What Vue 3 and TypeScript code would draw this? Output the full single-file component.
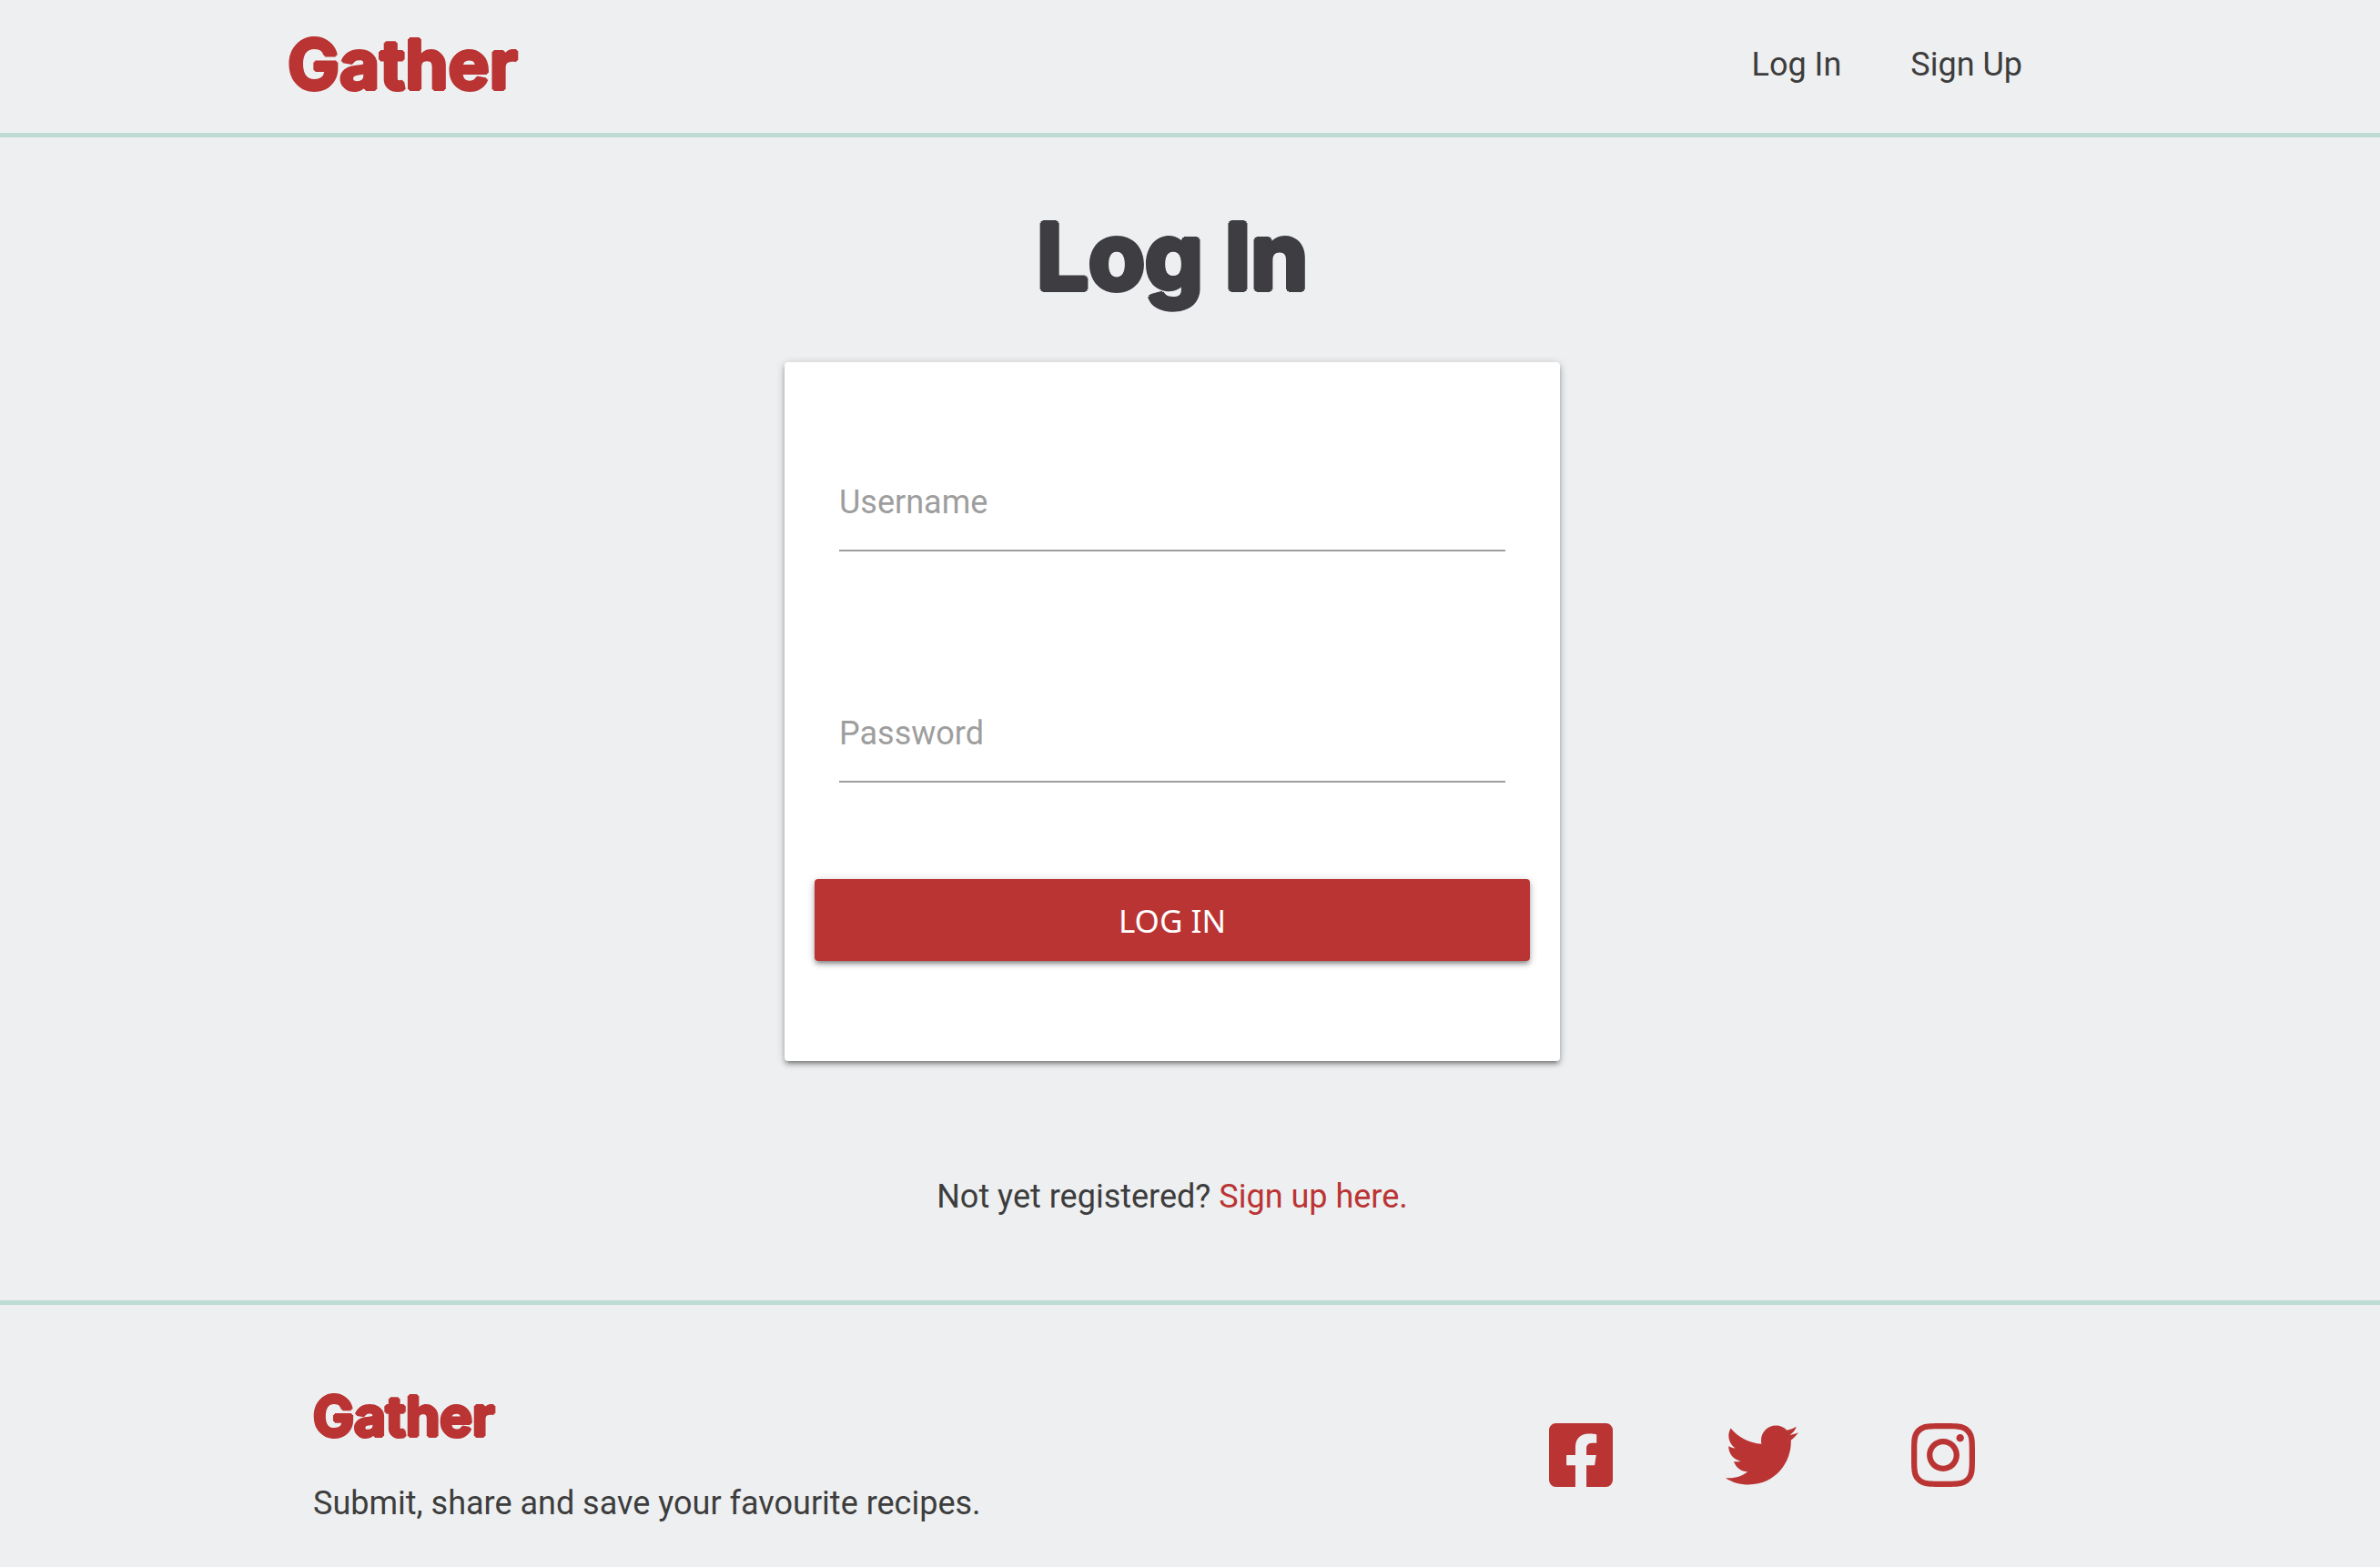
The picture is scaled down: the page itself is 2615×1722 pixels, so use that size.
<script setup lang="ts">
import { ref } from 'vue'

interface SocialLink {
  name: string
  viewBox: string
  width: number
  path: string
}

const username = ref('')
const password = ref('')

const socials: SocialLink[] = [
  {
    name: 'Facebook',
    viewBox: '0 0 448 512',
    width: 70,
    path: 'M400 32H48A48 48 0 0 0 0 80v352a48 48 0 0 0 48 48h137.250V327.690h-63V256h63v-54.640c0-62.150 37-96.480 93.670-96.480 27.140 0 55.520 4.840 55.520 4.840v61h-31.270c-30.810 0-40.420 19.120-40.420 38.730V256h68.780l-11 71.690h-57.780V480H400a48 48 0 0 0 48-48V80a48 48 0 0 0-48-48z',
  },
  {
    name: 'Twitter',
    viewBox: '0 0 512 512',
    width: 80,
    path: 'M459.370 151.716c.325 4.548.325 9.097.325 13.645 0 138.720-105.583 298.558-298.558 298.558-59.452 0-114.680-17.219-161.137-47.106 8.447.974 16.568 1.299 25.340 1.299 49.055 0 94.213-16.568 130.274-44.832-46.132-.975-84.792-31.188-98.112-72.772 6.498.974 12.995 1.624 19.818 1.624 9.421 0 18.843-1.300 27.614-3.573-48.081-9.747-84.143-51.980-84.143-102.985v-1.299c13.969 7.797 30.214 12.670 47.431 13.319-28.264-18.843-46.781-51.005-46.781-87.391 0-19.492 5.197-37.360 14.294-52.954 51.655 63.675 129.300 105.258 216.365 109.807-1.624-7.797-2.599-15.918-2.599-24.040 0-57.828 46.782-104.934 104.934-104.934 30.213 0 57.502 12.670 76.670 33.137 23.715-4.548 46.456-13.320 66.599-25.340-7.798 24.366-24.366 44.833-46.132 57.827 21.117-2.273 41.584-8.122 60.426-16.243-14.292 20.791-32.161 39.308-52.628 54.253z',
  },
  {
    name: 'Instagram',
    viewBox: '0 0 448 512',
    width: 70,
    path: 'M224.100 141c-63.600 0-114.900 51.300-114.900 114.900s51.300 114.900 114.900 114.900S339 319.500 339 255.900 287.700 141 224.100 141zm0 189.600c-41.100 0-74.700-33.500-74.700-74.700s33.500-74.700 74.700-74.700 74.700 33.500 74.700 74.700-33.600 74.700-74.700 74.700zm146.400-194.300c0 14.900-12 26.800-26.800 26.800-14.900 0-26.800-12-26.800-26.800s12-26.800 26.800-26.800 26.800 12 26.800 26.800zm76.100 27.200c-1.700-35.900-9.900-67.700-36.200-93.900-26.200-26.200-58-34.400-93.900-36.200-37-2.100-147.900-2.100-184.900 0-35.800 1.700-67.600 9.900-93.900 36.100s-34.400 58-36.200 93.900c-2.100 37-2.100 147.900 0 184.900 1.700 35.900 9.900 67.700 36.200 93.900s58 34.400 93.900 36.200c37 2.100 147.900 2.100 184.900 0 35.900-1.700 67.700-9.900 93.900-36.200 26.200-26.200 34.400-58 36.200-93.900 2.100-37 2.100-147.800 0-184.800zM398.800 388c-7.800 19.600-22.900 34.700-42.600 42.600-29.500 11.700-99.500 9-132.100 9s-102.700 2.600-132.100-9c-19.600-7.800-34.700-22.900-42.600-42.600-11.700-29.500-9-99.500-9-132.100s-2.600-102.700 9-132.100c7.800-19.600 22.900-34.700 42.600-42.600 29.500-11.700 99.500-9 132.100-9s102.700-2.600 132.100 9c19.600 7.800 34.700 22.900 42.600 42.600 11.700 29.500 9 99.500 9 132.100s2.700 102.700-9 132.100z',
  },
]
</script>

<template>
  <div class="page">
    <header class="header">
      <div class="container header-inner">
        <a class="logo" href="#">Gather</a>
        <nav class="nav">
          <a href="#">Log In</a>
          <a href="#">Sign Up</a>
        </nav>
      </div>
    </header>

    <main class="main">
      <h1 class="title">Log In</h1>
      <form class="card" @submit.prevent>
        <div class="field">
          <input id="username" v-model="username" type="text" autocomplete="username" />
          <label v-show="!username" for="username">Username</label>
        </div>
        <div class="field">
          <input id="password" v-model="password" type="password" autocomplete="current-password" />
          <label v-show="!password" for="password">Password</label>
        </div>
        <button class="submit" type="submit">LOG IN</button>
      </form>
      <p class="register">Not yet registered? <a href="#">Sign up here.</a></p>
    </main>

    <footer class="footer">
      <div class="container footer-inner">
        <div>
          <a class="logo logo-small" href="#">Gather</a>
          <p class="tagline">Submit, share and save your favourite recipes.</p>
        </div>
        <ul class="socials">
          <li v-for="s in socials" :key="s.name">
            <a href="#" :aria-label="s.name">
              <svg :viewBox="s.viewBox" :width="s.width" height="80" aria-hidden="true">
                <path :d="s.path" fill="currentColor" />
              </svg>
            </a>
          </li>
        </ul>
      </div>
    </footer>
  </div>
</template>

<style>
body {
  margin: 0;
  background: #edeff0;
}
</style>

<style scoped>
.page {
  color: #3d3d3d;
  font-family: Roboto, "Liberation Sans", sans-serif;
  font-size: 36px;
  line-height: 54px;
}

a {
  color: inherit;
  text-decoration: none;
}

.header,
.main,
.footer {
  padding-right: 39px;
}

.container {
  box-sizing: border-box;
  width: 90%;
  max-width: 1944px;
  margin: 0 auto;
}

.header {
  border-bottom: 5px solid #bddad3;
}

.header-inner {
  display: flex;
  align-items: center;
  justify-content: space-between;
  height: 146px;
  padding: 0 38px 4px 0;
}

/* Rings of solid shadow thicken the letters and round off their corners. */
.logo {
  display: block;
  padding-bottom: 2px;
  color: #bb3434;
  font-family: Inter, "Open Sans", sans-serif;
  font-size: 76px;
  font-weight: 700;
  line-height: 96px;
  text-shadow: 2px 0, -2px 0, 0 2px, 0 -2px, 1px 1px, -1px 1px, 1px -1px, -1px -1px;
}

.nav {
  display: flex;
  gap: 76px;
}

.title {
  margin: 0;
  padding: 70px 0 57px;
  color: #3e3d42;
  font-family: Inter, "Open Sans", sans-serif;
  font-size: 101px;
  font-weight: 700;
  line-height: 120px;
  text-align: center;
  text-shadow: 3px 0, -3px 0, 0 3px, 0 -3px, 2px 2px, -2px 2px, 2px -2px, -2px -2px;
}

.card {
  box-sizing: border-box;
  display: flex;
  flex-direction: column;
  width: 90%;
  max-width: 852px;
  margin: 0 auto;
  padding: 118px 33px 110px;
  border-radius: 4px;
  background: #fff;
  box-shadow: 0 4px 4px rgba(0, 0, 0, 0.2), 0 6px 2px -4px rgba(0, 0, 0, 0.14), 0 2px 10px rgba(0, 0, 0, 0.24);
}

.field {
  display: grid;
  height: 90px;
  margin: 0 27px;
}

.field + .field {
  margin-top: 164px;
}

.field input,
.field label {
  grid-area: 1 / 1;
}

.field input {
  box-sizing: border-box;
  width: 100%;
  padding: 0;
  border: 0;
  border-bottom: 2px solid #9e9e9e;
  outline: 0;
  background: transparent;
  color: inherit;
  font: inherit;
}

.field label {
  align-self: start;
  color: #9e9e9e;
  line-height: 72px;
  cursor: text;
}

.submit {
  height: 90px;
  margin-top: 106px;
  padding: 0;
  border: 0;
  border-radius: 4px;
  background: #bb3434;
  color: #fff;
  font-family: "Noto Sans", "Open Sans", sans-serif;
  font-size: 35px;
  box-shadow: 0 4px 4px rgba(0, 0, 0, 0.2), 0 6px 2px -4px rgba(0, 0, 0, 0.14), 0 2px 10px rgba(0, 0, 0, 0.24);
}

.register {
  margin: 0;
  padding: 122px 0 87px;
  text-align: center;
}

.register a {
  color: #bb3434;
}

.footer {
  border-top: 5px solid #bddad3;
}

.footer-inner {
  display: flex;
  align-items: center;
  justify-content: space-between;
  padding: 85px 26px 43px 28px;
}

.logo-small {
  padding: 1px 0 0;
  font-size: 60px;
  line-height: 72px;
}

.tagline {
  margin: 33px 0 0;
}

.socials {
  display: flex;
  margin: 0;
  padding: 0;
  list-style: none;
}

.socials li {
  display: flex;
  justify-content: center;
  width: 199px;
}

.socials a {
  display: flex;
  color: #bb3434;
}
</style>
